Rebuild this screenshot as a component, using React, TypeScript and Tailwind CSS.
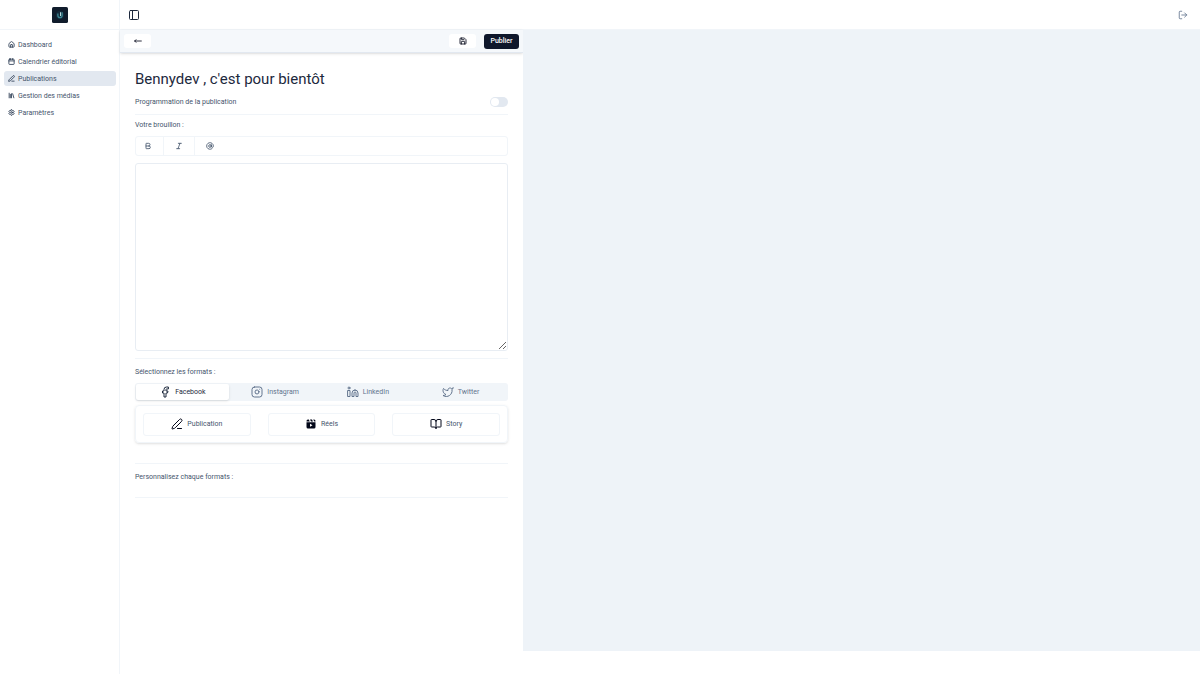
import { Fragment, useState } from 'react';
import {
  AtSign,
  Bold,
  BookOpen,
  Calendar,
  Facebook,
  House,
  Instagram,
  Italic,
  Library,
  Linkedin,
  LogOut,
  MoveLeft,
  PanelLeft,
  PenLine,
  Save,
  Settings,
  Twitter,
} from 'lucide-react';
import clsx from 'clsx';

const navItems = [
  { label: 'Dashboard', icon: House },
  { label: 'Calendrier éditorial', icon: Calendar },
  { label: 'Publications', icon: PenLine },
  { label: 'Gestion des médias', icon: Library },
  { label: 'Paramètres', icon: Settings },
];

const networks = [
  { label: 'Facebook', icon: Facebook },
  { label: 'Instagram', icon: Instagram },
  { label: 'LinkedIn', icon: Linkedin },
  { label: 'Twitter', icon: Twitter },
];

const tools = [
  { label: 'Gras', icon: Bold },
  { label: 'Italique', icon: Italic },
  { label: 'Mention', icon: AtSign },
];

function ReelsIcon({ className }: { className?: string }) {
  return (
    <svg viewBox="0 0 24 24" className={className} fill="currentColor" aria-hidden="true">
      <path d="M6 3h1.500l2 4H3C3 4.500 4 3 6 3zM10 3h4l2 4h-4zM16.500 3H18c2 0 3 1.500 3 4h-2.500z" />
      <path
        fillRule="evenodd"
        d="M3 8.500h18V18a3 3 0 0 1-3 3H6a3 3 0 0 1-3-3zM10 11.500v6l5-3z"
      />
    </svg>
  );
}

const formats = [
  { label: 'Publication', icon: PenLine },
  { label: 'Réels', icon: ReelsIcon },
  { label: 'Story', icon: BookOpen },
];

function Logo() {
  return (
    <svg viewBox="0 0 30 30" className="size-4" aria-label="Bennydev">
      <rect width="30" height="30" rx="3" fill="#101c2c" />
      <circle cx="15" cy="15" r="8" fill="#13293a" />
      <path d="M11 12v4a4 4 0 0 0 8 0v-6" fill="none" stroke="#3b8592" strokeWidth="2.5" />
      <path d="M16 10v7" stroke="#b9dde0" strokeWidth="2" />
    </svg>
  );
}

function Sidebar() {
  return (
    <aside className="w-[120px] shrink-0 border-r border-slate-100">
      <div className="flex h-[30px] items-center justify-center border-b border-slate-100">
        <Logo />
      </div>
      <nav className="flex flex-col gap-0.5 px-1 pt-[7px] pr-[3px]">
        {navItems.map(({ label, icon: Icon }) => (
          <a
            key={label}
            href="#"
            className={clsx(
              'flex h-[15px] items-center gap-[3px] rounded-[3px] px-1',
              label === 'Publications' && 'bg-slate-200'
            )}
          >
            <Icon className="size-[7px] text-slate-700" strokeWidth={3} />
            {label}
          </a>
        ))}
      </nav>
    </aside>
  );
}

function Editor() {
  const [scheduled, setScheduled] = useState(false);
  const [network, setNetwork] = useState('Facebook');

  return (
    <section className="w-[403px] shrink-0">
      <div className="flex h-[23px] items-center border-b border-slate-200 bg-slate-100/70 px-1 shadow-sm">
        <button aria-label="Retour" className="flex h-[14px] w-[27px] items-center justify-center rounded-[3px] bg-white">
          <MoveLeft className="size-2 text-slate-950" strokeWidth={2.5} />
        </button>
        <button aria-label="Enregistrer" className="mr-2 ml-auto flex h-[14px] w-[27px] items-center justify-center rounded-[3px] bg-white">
          <Save className="size-2 text-slate-950" strokeWidth={2.5} />
        </button>
        <button className="h-[15px] w-[35px] rounded-[3px] bg-slate-900 font-medium text-white">Publier</button>
      </div>

      <div className="px-[15px] pt-4">
        <h1 className="text-[15px] leading-5 text-slate-800">Bennydev , c'est pour bientôt</h1>

        <div className="mt-[5px] flex h-[15px] items-center justify-between">
          <label htmlFor="schedule">Programmation de la publication</label>
          <input
            id="schedule"
            type="checkbox"
            role="switch"
            checked={scheduled}
            onChange={(e) => setScheduled(e.target.checked)}
            className="h-[10px] w-[18px] appearance-none rounded-full bg-slate-200 p-px before:block before:size-2 before:rounded-full before:bg-white checked:bg-slate-900 checked:before:ml-2"
          />
        </div>

        <hr className="mt-[5px] border-slate-100" />
        <label htmlFor="draft" className="mt-[5px] block">Votre brouillon :</label>
        <div className="mt-[6px] flex h-5 items-center gap-[3px] rounded-[3px] border border-slate-100">
          {tools.map(({ label, icon: Icon }, index) => (
            <Fragment key={label}>
              {index > 0 && <div className="h-full w-px bg-slate-100" />}
              <button aria-label={label} className="flex h-full w-6 items-center justify-center">
                <Icon className="size-2" strokeWidth={2.5} />
              </button>
            </Fragment>
          ))}
        </div>
        <textarea id="draft" className="mt-[7px] block h-[188px] w-full rounded-[3px] border border-slate-200/80 p-1" />

        <hr className="mt-[7px] border-slate-100" />
        <p className="mt-2">Sélectionnez les formats :</p>
        <div role="tablist" className="mt-[6px] grid h-[18px] grid-cols-4 rounded-[3px] bg-slate-100 p-px">
          {networks.map(({ label, icon: Icon }) => (
            <button
              key={label}
              role="tab"
              aria-selected={network === label}
              onClick={() => setNetwork(label)}
              className={clsx(
                'flex items-center justify-center gap-1 rounded-[2px]',
                network === label ? 'bg-white text-slate-800 shadow-sm' : 'text-slate-500'
              )}
            >
              <Icon className="size-3" strokeWidth={2} />
              {label}
            </button>
          ))}
        </div>
        <div className="mt-1 grid h-[38px] grid-cols-3 items-center gap-[17px] rounded-[4px] border border-slate-100 px-[7px] shadow-sm">
          {formats.map(({ label, icon: Icon }) => (
            <button
              key={label}
              className="flex h-[23px] items-center justify-center gap-1 rounded-[3px] border border-slate-100"
            >
              <Icon className="size-3 text-slate-950" />
              {label}
            </button>
          ))}
        </div>

        <hr className="mt-5 border-slate-100" />
        <p className="mt-2">Personnalisez chaque formats :</p>
        <hr className="mt-[15px] border-slate-100" />
      </div>
    </section>
  );
}

export default function App() {
  return (
    <div className="flex min-h-screen bg-white font-['Roboto',sans-serif] text-[7px] leading-[10px] text-slate-600">
      <Sidebar />
      <div className="flex min-w-0 flex-1 flex-col">
        <header className="flex h-[30px] items-center justify-between border-b border-slate-100 px-2">
          <button aria-label="Menu" className="text-slate-800">
            <PanelLeft className="size-3" />
          </button>
          <button aria-label="Déconnexion" className="mr-1 text-slate-500">
            <LogOut className="size-[10px]" />
          </button>
        </header>
        <main className="mb-[23px] flex flex-1">
          <Editor />
          <section aria-label="Aperçu" className="flex-1 bg-[#eef3f8]" />
        </main>
      </div>
    </div>
  );
}
